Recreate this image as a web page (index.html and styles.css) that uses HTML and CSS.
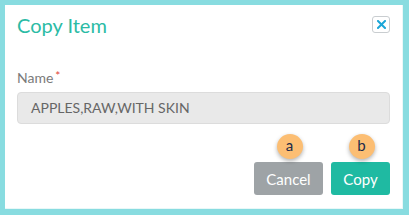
FILE: index.html
```html
<!DOCTYPE html>
<html>
<head>
<meta charset="utf-8">
<link rel="stylesheet" href="styles.css">
</head>
<body>
<div class="dialog">
  <div class="header">
    <h1 class="title">Copy Item</h1>
    <button class="close" aria-label="Close">
      <svg width="9" height="9" viewBox="0 0 9 9"><path d="M1 1L8 8M8 1L1 8" stroke="#1ba6d8" stroke-width="2" stroke-linecap="square"/></svg>
    </button>
  </div>
  <div class="body">
    <label class="label">Name<span class="req">*</span></label>
    <div class="input">APPLES,RAW,WITH SKIN</div>
  </div>
  <div class="footer">
    <div class="btn-wrap">
      <span class="badge">a</span>
      <button class="btn cancel">Cancel</button>
    </div>
    <div class="btn-wrap">
      <span class="badge">b</span>
      <button class="btn copy">Copy</button>
    </div>
  </div>
</div>
</body>
</html>
```
FILE: styles.css
```css
html, body {
  margin: 0;
  padding: 0;
}
body {
  background: #88dce0;
  font-family: Lato, "Liberation Sans", sans-serif;
  width: 409px;
  height: 215px;
  box-sizing: border-box;
  padding: 5px 6px 6px 5px;
}
.dialog {
  background: #fff;
  height: 204px;
  box-sizing: border-box;
  border-right: 1px solid #e8f8f8;
  border-bottom: 1px solid #e8f8f8;
  padding: 0 12px 0 12px;
  display: flex;
  flex-direction: column;
}
.header {
  display: flex;
  justify-content: space-between;
  align-items: flex-start;
  padding-top: 6px;
}
.title {
  margin: 0;
  font-size: 20px;
  font-weight: 400;
  line-height: 28px;
  color: #2bbba5;
}
.close {
  margin-top: 5px;
  width: 18px;
  height: 17px;
  padding: 0;
  border: 1px solid #c9cdd0;
  border-radius: 3px;
  background: #fff;
  display: flex;
  align-items: center;
  justify-content: center;
}
.body {
  padding-top: 28px;
}
.label {
  display: block;
  font-size: 14px;
  line-height: 18px;
  color: #7a7a7a;
}
.req {
  color: #e0453a;
  font-size: 12px;
  vertical-align: 3px;
  margin-left: 2px;
}
.input {
  margin-top: 5px;
  height: 32px;
  box-sizing: border-box;
  background: #e9e9e9;
  border: 1px solid #dcdcdc;
  border-radius: 4px;
  padding: 0 13px;
  font-size: 14px;
  line-height: 30px;
  color: #666;
}
.footer {
  display: flex;
  justify-content: flex-end;
  gap: 8px;
  margin-top: 38px;
}
.btn-wrap {
  position: relative;
}
.btn {
  height: 33px;
  border: none;
  border-radius: 3px;
  color: #fff;
  font-family: Lato, "Liberation Sans", sans-serif;
  font-size: 15px;
  padding: 0;
  display: block;
}
.cancel {
  width: 69px;
  background: #9ea3a6;
}
.copy {
  width: 59px;
  background: #1fbaa2;
}
.badge {
  position: absolute;
  left: 50%;
  top: -28px;
  transform: translateX(-46%);
  width: 26px;
  height: 25px;
  border-radius: 50%;
  background: #fcbe73;
  box-shadow: 0 2px 4px rgba(0,0,0,0.3);
  color: #222b4a;
  font-size: 15px;
  line-height: 23px;
  text-align: center;
}
```
